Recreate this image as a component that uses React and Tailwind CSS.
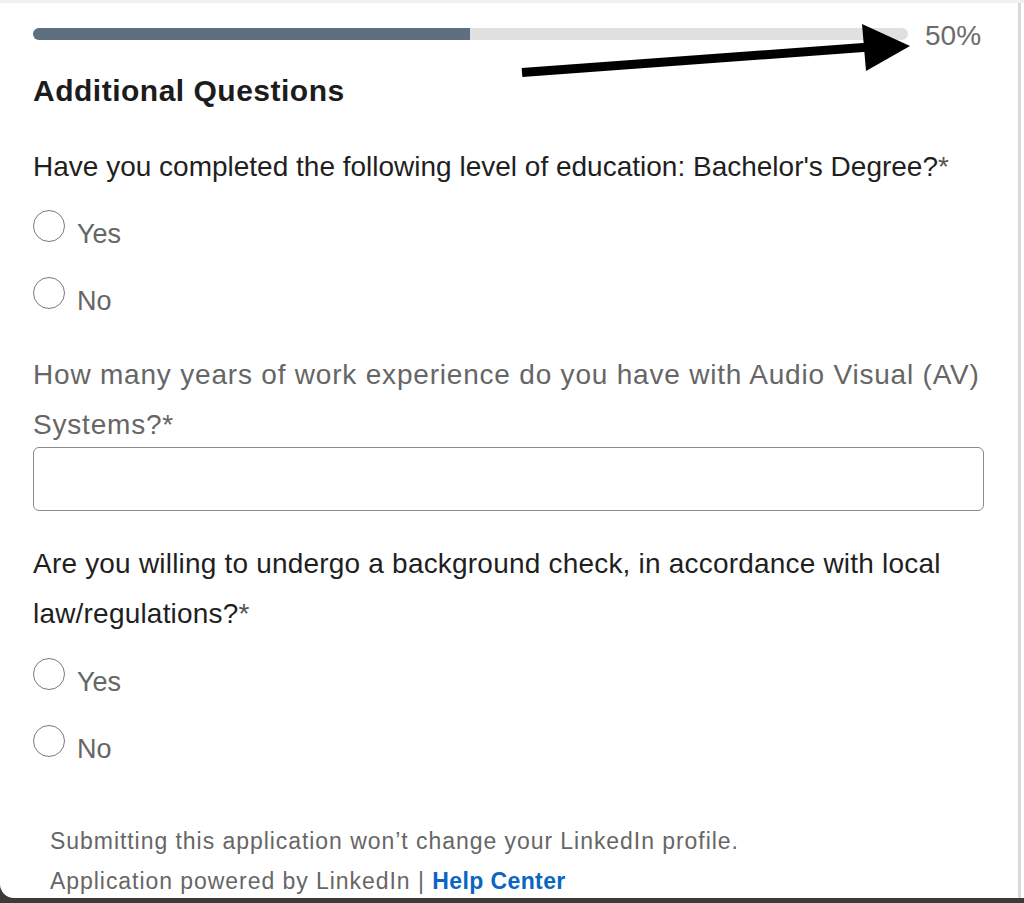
import React from 'react'

const font = { fontFamily: '"Liberation Sans", Arial, sans-serif' }

const Radio = ({ label }) => (
  <label className="flex items-start cursor-pointer">
    <span className="w-8 h-8 rounded-full border-[1.5px] border-[#7c7c7c] bg-white shrink-0" />
    <span className="ml-[12px] mt-[9px] text-[27px] leading-[30px] text-[#666666]">{label}</span>
  </label>
)

export default function App() {
  return (
    <div className="relative w-[1024px] h-[903px] bg-[#3b3b3b] overflow-hidden" style={font}>
      <div className="h-[898px] bg-white rounded-bl-[14px] overflow-hidden flex flex-col">
        {/* top strip */}
        <div className="h-[3px] bg-[#f1f1f1] shrink-0" />

        <div className="flex flex-1 min-h-0">
          {/* form */}
          <div className="flex-1 pl-[33px] pr-[33px]">
            {/* progress */}
            <div className="mt-[18px] flex items-start">
              <div className="mt-[7px] w-[875px] h-[12px] rounded-full bg-[#e0e0e0] overflow-hidden">
                <div className="h-full w-[437px] bg-[#5e6f82]" />
              </div>
              <span className="ml-[17px] text-[28px] leading-[30px] text-[#6b6b6b]">50%</span>
            </div>

            <h2 className="mt-[23px] text-[30px] leading-[34px] font-bold tracking-[0.5px] text-[#1c1c1c]">
              Additional Questions
            </h2>

            {/* question 1 */}
            <p className="mt-[34px] text-[28px] leading-[50px] text-[#1f1f1f]">
              Have you completed the following level of education: Bachelor's Degree?<span className="text-[#555555]">*</span>
            </p>
            <div className="mt-[18px]">
              <Radio label="Yes" />
            </div>
            <div className="mt-[28px]">
              <Radio label="No" />
            </div>

            {/* question 2 */}
            <p className="mt-[34px] -mb-[3px] text-[28px] leading-[50px] tracking-[0.8px] text-[#666666]">
              How many years of work experience do you have with Audio Visual (AV) Systems?*
            </p>
            <input
              type="text"
              className="block w-[951px] h-[64px] rounded-md border border-[#8a8a8a] bg-white px-3 outline-none"
            />

            {/* question 3 */}
            <p className="mt-[28px] text-[28px] leading-[50px] tracking-[0.2px] text-[#1f1f1f]">
              Are you willing to undergo a background check, in accordance with local law/regulations?<span className="text-[#555555]">*</span>
            </p>
            <div className="mt-[19px]">
              <Radio label="Yes" />
            </div>
            <div className="mt-[28px]">
              <Radio label="No" />
            </div>

            {/* footer */}
            <div className="mt-[57px] pl-[17px] text-[23px] leading-[40px] tracking-[0.95px] text-[#666666]">
              <p>Submitting this application won’t change your LinkedIn profile.</p>
              <p>
                Application powered by LinkedIn | <a href="#" className="font-bold tracking-[0.4px] text-[#0a66c2]">Help Center</a>
              </p>
            </div>
          </div>

          {/* scrollbar edge */}
          <div className="w-[6px] shrink-0 flex">
            <div className="w-[3px] bg-[#d9d9d9]" />
          </div>
        </div>
      </div>

      {/* annotation arrow */}
      <svg className="absolute inset-0 pointer-events-none" width="1024" height="903" viewBox="0 0 1024 903">
        <line x1="522" y1="72.5" x2="870" y2="47" stroke="#000" strokeWidth="9" />
        <polygon points="862,24 910,46 866,71" fill="#000" />
      </svg>
    </div>
  )
}
